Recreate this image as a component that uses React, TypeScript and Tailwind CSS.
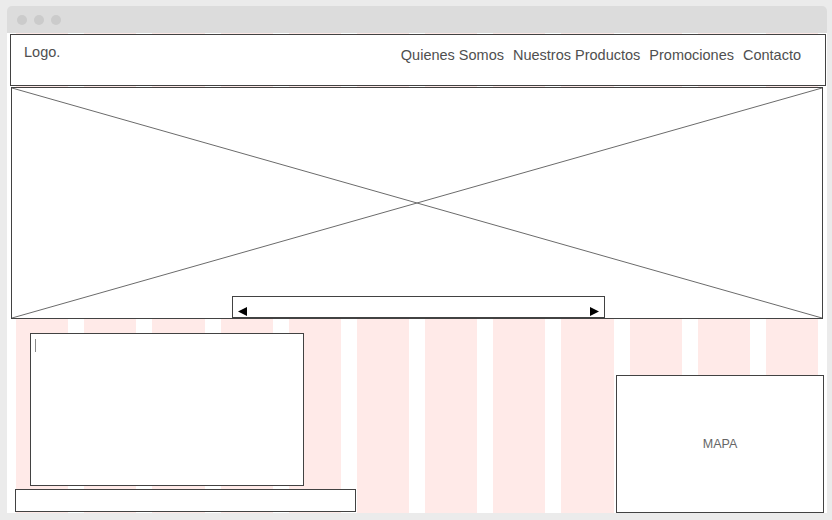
const cols = Array.from({ length: 12 })

function Arrow({ dir }: { dir: 'left' | 'right' }) {
  return (
    <svg width="9" height="9" viewBox="0 0 9 9">
      {dir === 'left' ? <polygon points="9,0 9,9 0,4.5" fill="#000" /> : <polygon points="0,0 0,9 9,4.5" fill="#000" />}
    </svg>
  )
}

export default function App() {
  return (
    <div className="h-[520px] w-[832px] bg-[#ebebeb] pl-[7px] pt-[6px] font-['Liberation_Sans',Arial,sans-serif]">
      <div className="w-[820px] overflow-hidden rounded-t-[5px]">
        {/* title bar */}
        <div className="flex h-[27px] items-center gap-[7px] bg-[#dcdcdc] pl-[10px]">
          <span className="h-[10px] w-[10px] rounded-full bg-[#cbcbcb]" />
          <span className="h-[10px] w-[10px] rounded-full bg-[#cbcbcb]" />
          <span className="h-[10px] w-[10px] rounded-full bg-[#cbcbcb]" />
        </div>

        <div className="relative h-[480px] bg-white">
          {/* column guides */}
          <div className="absolute bottom-0 left-[9px] top-0 grid w-[802px] grid-cols-12 gap-x-[16px]">
            {cols.map((_, i) => (
              <div key={i} className="bg-[#ffeae8]" />
            ))}
          </div>

          <div className="relative flex flex-col">
            {/* header */}
            <div className="ml-[3px] mt-[1px] flex h-[52px] w-[816px] items-start justify-between border border-[#424242] bg-white text-[14.5px] leading-[17px] text-[#4f4f4f]">
              <span className="ml-[13px] mt-[9px]">Logo.</span>
              <nav className="mr-[24px] mt-[12px] flex gap-[9px]">
                <span>Quienes Somos</span>
                <span>Nuestros Productos</span>
                <span>Promociones</span>
                <span>Contacto</span>
              </nav>
            </div>

            {/* hero image placeholder */}
            <div className="relative ml-[4px] mt-[1px] h-[232px] w-[812px] border border-[#424242] bg-white">
              <svg className="absolute inset-0 h-full w-full" viewBox="0 0 810 230" preserveAspectRatio="none">
                <line x1="0" y1="0" x2="810" y2="230" stroke="#6b6b6b" strokeWidth="1" />
                <line x1="0" y1="230" x2="810" y2="0" stroke="#6b6b6b" strokeWidth="1" />
              </svg>
              <div className="absolute bottom-0 left-[220px] flex h-[22px] w-[373px] items-center justify-between border border-[#424242] bg-white px-[5px] pt-[8px]">
                <Arrow dir="left" />
                <Arrow dir="right" />
              </div>
            </div>

            {/* lower section */}
            <div className="flex h-[194px] justify-between">
              <div className="flex flex-col">
                <div className="ml-[23px] mt-[14px] h-[153px] w-[274px] border border-[#424242] bg-white">
                  <div className="ml-[4px] mt-[5px] h-[13px] w-px bg-[#8a8a8a]" />
                </div>
                <div className="ml-[8px] mt-[3px] h-[23px] w-[341px] border border-[#424242] bg-white" />
              </div>
              <div className="mr-[3px] flex h-[138px] w-[208px] items-center justify-center self-end border border-[#424242] bg-white text-[12.5px] text-[#666]">
                MAPA
              </div>
            </div>
          </div>
        </div>
      </div>
    </div>
  )
}
